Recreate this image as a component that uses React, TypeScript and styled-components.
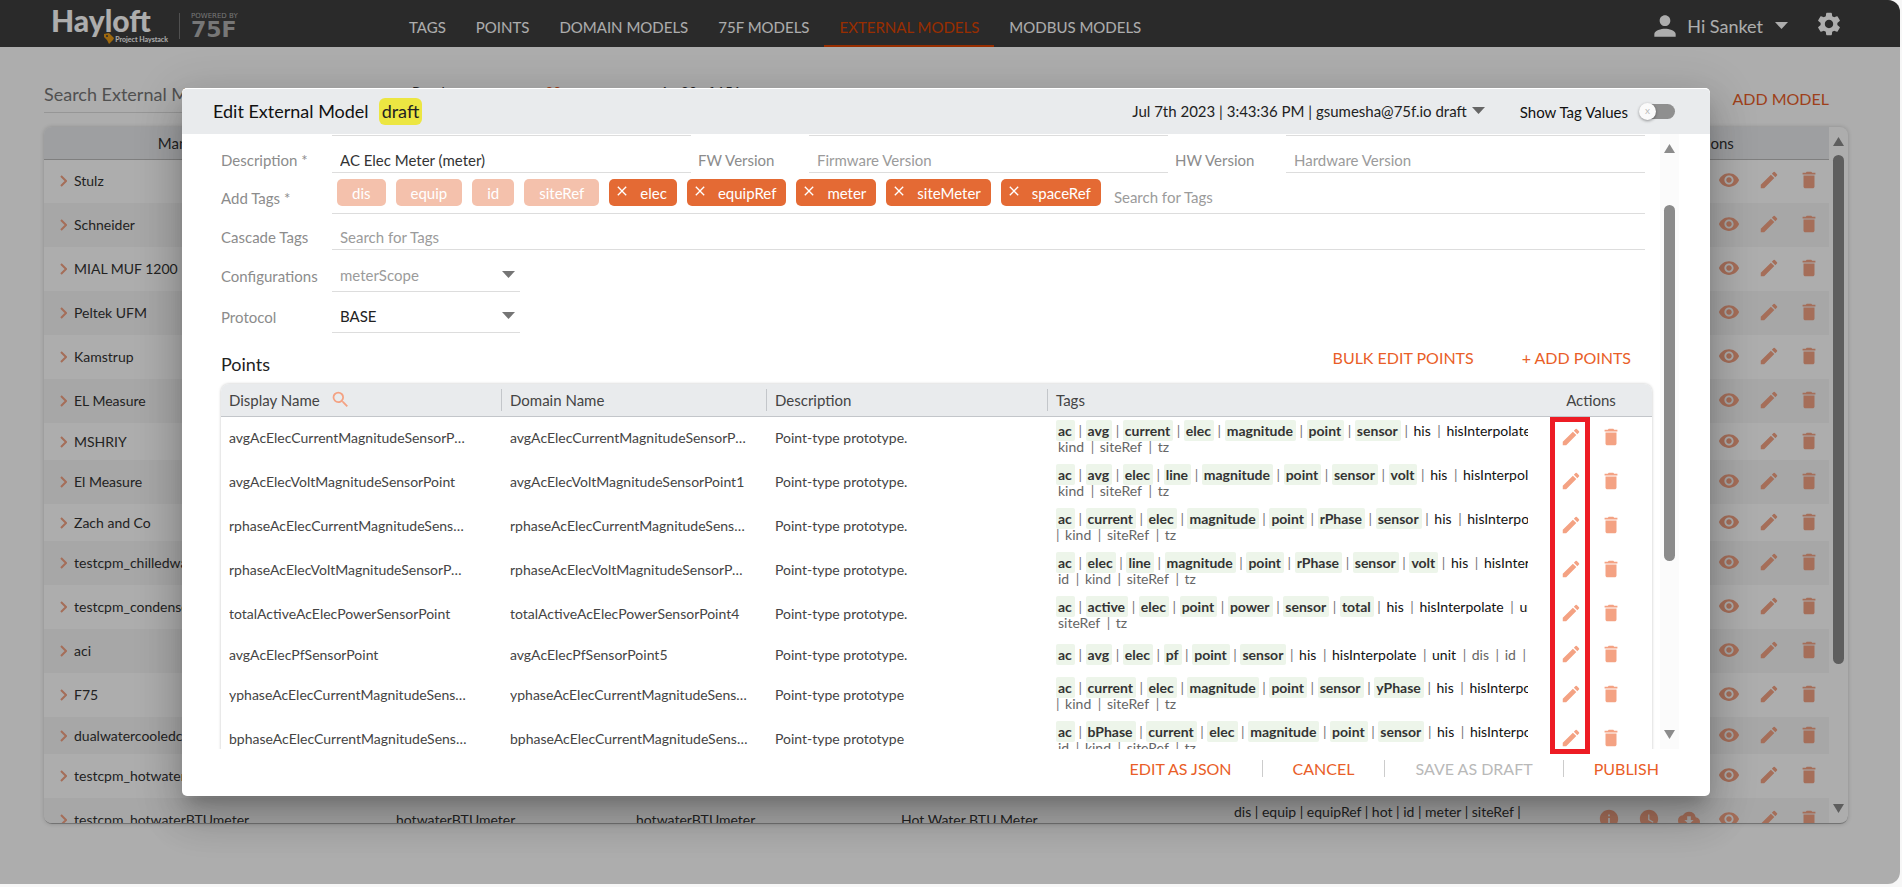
import React from "react";
import styled, { createGlobalStyle, css } from "styled-components";
import {
  MdClose,
  MdCloudDownload,
  MdDelete,
  MdEdit,
  MdInfo,
  MdPerson,
  MdSearch,
  MdSettings,
  MdVisibility,
  MdWatchLater,
} from "react-icons/md";

const ORANGE = "#e95e28";

const GlobalStyle = createGlobalStyle`
  *, *::before, *::after { box-sizing: border-box; }
  body { margin: 0; background: #f7f7f7; font-family: Lato, "Liberation Sans", sans-serif; color: #333; }
  button, input, select { font: inherit; color: inherit; border: 0; background: none; padding: 0; margin: 0; }
  button { cursor: pointer; }
  a { color: inherit; text-decoration: none; }
`;

const Frame = styled.div`
  position: relative;
  display: flex;
  flex-direction: column;
  height: calc(100vh - 3px);
  margin-right: 2px;
  overflow: hidden;
  border-radius: 0 12px 12px 0;
  background: #fff;
`;

/* ---------- top bar ---------- */

const TopBar = styled.header`
  display: flex;
  align-items: stretch;
  flex: none;
  height: 47px;
  padding: 0 57px 0 51px;
  background: #3e3e3e;
  color: #fff;
`;

const Brand = styled.div`
  display: flex;
  align-items: center;
  width: 343px;
`;

const BrandName = styled.div`
  display: flex;
  flex-direction: column;
  align-items: flex-end;
  width: 117px;
  padding-top: 2px;
`;

const BrandWord = styled.strong`
  align-self: flex-start;
  font-size: 30px;
  line-height: 28px;
  font-weight: 900;
  color: #fff;
`;

const BrandSub = styled.span`
  display: flex;
  align-items: center;
  gap: 1px;
  height: 10px;
  font-size: 7px;
  line-height: 10px;
  font-weight: 700;
`;

const BrandPowered = styled.div`
  display: flex;
  flex-direction: column;
  justify-content: center;
  height: 26px;
  margin: 4px 0 0 11px;
  padding-left: 11px;
  border-left: 1px solid #777;
  color: #b0b0b0;
  font: 7px/8px "DejaVu Sans", sans-serif;
`;

const BrandNumber = styled.span`
  font: 700 22px/20px "DejaVu Sans", sans-serif;
`;

const Nav = styled.nav`
  display: flex;
  flex: 1;
`;

const NavLink = styled.a<{ $active?: boolean }>`
  display: flex;
  align-items: center;
  padding: 8px 15px 0;
  border-bottom: 2px solid transparent;
  font-size: 15px;
  line-height: 20px;
  white-space: nowrap;
  ${(p) =>
    p.$active &&
    css`
      color: #e04400;
      border-color: #e04400;
    `}
`;

const Account = styled.div`
  display: flex;
  align-items: center;
  gap: 27px;
`;

const AccountButton = styled.button`
  display: flex;
  align-items: center;
  gap: 12px;
  padding-top: 4px;
  font-size: 18px;
  line-height: 22px;
  svg:first-child { margin: 0 -6px; }
`;

/* ---------- page behind the dialog ---------- */

const Page = styled.main`
  display: flex;
  flex: 1;
  flex-direction: column;
  min-height: 0;
  padding: 31px 52px 60px 44px;
`;

const Toolbar = styled.div`
  display: flex;
  align-items: flex-start;
  height: 49px;
  padding-right: 19px;
`;

const SearchBox = styled.input`
  width: 300px;
  height: 35px;
  padding-bottom: 3px;
  border-bottom: 1px solid #ddd;
  font-size: 18px;
  &::placeholder { color: #777; opacity: 1; }
`;

const Pager = styled.div`
  display: flex;
  flex: 1;
  gap: 99px;
  padding: 5px 0 0 68px;
  font-size: 14px;
  line-height: 18px;
  b { margin-left: 29px; font-weight: 400; color: ${ORANGE}; }
`;

const TextButton = styled.button`
  font-size: 16px;
  line-height: 22px;
  color: ${ORANGE};
  white-space: nowrap;
  &:disabled { color: #b9b9b9; cursor: default; }
`;

const AddModel = styled(TextButton)`
  padding-top: 10px;
`;

const ModelsPanel = styled.section`
  display: flex;
  flex: 1;
  min-height: 0;
  overflow: hidden;
  border-bottom: 1px solid #aaa;
  border-radius: 8px;
  box-shadow: 0 0 4px rgba(0, 0, 0, 0.2);
`;

const TableClip = styled.div`
  flex: 1;
  min-width: 0;
  overflow: hidden;
`;

const ModelsTable = styled.table`
  width: 100%;
  table-layout: fixed;
  border-collapse: collapse;
  font-size: 14px;
  line-height: 18px;
  th {
    height: 32px;
    padding: 0 0 0 8px;
    border-bottom: 1px solid #bbb;
    background: #e9ebee;
    font-size: 15px;
    font-weight: 400;
  }
  th:last-child { padding: 0 8px; }
  td { padding: 0; white-space: nowrap; }
`;

const ModelRow = styled.tr<{ $short?: boolean }>`
  height: ${(p) => (p.$short ? 37 : 44)}px;
  &:nth-child(even) { background: #f6f6f6; }
`;

const ModelName = styled.span`
  display: flex;
  align-items: center;
  gap: 7px;
  padding-left: 16px;
  color: #333;
`;

const Chevron = () => (
  <svg width="7" height="12" viewBox="0 0 7 12" fill="none" stroke="#f3a283" strokeWidth="2" aria-hidden="true">
    <path d="M1 1l5 5-5 5" />
  </svg>
);

const TwoLines = styled.div`
  line-height: 17px;
`;

const IconRow = styled.div<{ $start?: boolean }>`
  display: flex;
  justify-content: ${(p) => (p.$start ? "flex-start" : "flex-end")};
  gap: 18px;
  padding: ${(p) => (p.$start ? "0 0 2px 16px" : "0 9px 2px 0")};
`;

const IconButton = styled.button`
  display: flex;
  color: #f4a283;
`;

const SettingsButton = styled(IconButton)`
  color: #fff;
`;

/* ---------- scroll bar ---------- */

const ScrollTrack = styled.div<{ $top: number; $thumb: number; $wide?: boolean }>`
  display: flex;
  flex: none;
  flex-direction: column;
  align-items: center;
  width: 19px;
  padding: 10px 0;
  background: ${(p) => (p.$wide ? "#fbfbfb" : "transparent")};
  color: #8b8b8b;
  i {
    width: 11px;
    height: ${(p) => p.$thumb}px;
    margin: ${(p) => p.$top}px 0 auto;
    border-radius: 6px;
    background: #8b8b8b;
  }
`;

const Triangle = ({ up, wide }: { up?: boolean; wide?: boolean }) => (
  <svg width={wide ? 13 : 11} height={wide ? 7 : 9} viewBox="0 0 10 10" preserveAspectRatio="none" fill="currentColor" aria-hidden="true">
    <path d={up ? "M0 10 5 0l5 10z" : "M0 0h10L5 10z"} />
  </svg>
);

const ScrollBar = ({ top, thumb, wide }: { top: number; thumb: number; wide?: boolean }) => (
  <ScrollTrack $top={top} $thumb={thumb} $wide={wide}>
    <Triangle up />
    <i />
    <Triangle />
  </ScrollTrack>
);

/* ---------- dialog ---------- */

const Backdrop = styled.div`
  position: absolute;
  inset: 0;
  display: flex;
  padding: 88px 190px 88px 182px;
  background: rgba(0, 0, 0, 0.32);
`;

const Dialog = styled.section`
  position: relative;
  display: flex;
  flex: 1;
  flex-direction: column;
  min-width: 0;
  border-radius: 5px;
  background: #fff;
  box-shadow:
    0 11px 15px -7px rgba(0, 0, 0, 0.2),
    0 24px 38px 3px rgba(0, 0, 0, 0.14),
    0 9px 46px 8px rgba(0, 0, 0, 0.12);
`;

const DialogHeader = styled.header`
  display: flex;
  align-items: center;
  flex: none;
  height: 46px;
  padding: 0 35px 0 31px;
  border-top: 1px solid #fff;
  border-radius: 5px 5px 0 0;
  background: #e9ebed;
  color: #222;
`;

const Title = styled.h1`
  margin: 0;
  padding-bottom: 1px;
  font-size: 18px;
  line-height: 22px;
  font-weight: 400;
  color: #111;
`;

const Badge = styled.span`
  margin: 0 auto 0 10px;
  padding: 2px 3px 3px;
  border-radius: 6px;
  background: #ece642;
  font-size: 18px;
  line-height: 22px;
`;

const Revision = styled.button`
  display: flex;
  align-items: center;
  gap: 5px;
  margin-right: 35px;
  padding-bottom: 2px;
  font-size: 15px;
  line-height: 20px;
  svg { color: #666; }
`;

const Toggle = styled.label`
  display: flex;
  align-items: center;
  gap: 13px;
  font-size: 15px;
  line-height: 20px;
  color: #111;
  input {
    appearance: none;
    display: flex;
    align-items: center;
    width: 34px;
    height: 15px;
    border-radius: 8px;
    background: #8f8f8f;
  }
  input::before {
    content: "x";
    flex: none;
    width: 17px;
    height: 17px;
    margin-left: -2px;
    border-radius: 50%;
    background: #fafafa;
    box-shadow: 0 1px 3px rgba(0, 0, 0, 0.4);
    color: #bbb;
    font-size: 10px;
    line-height: 15px;
    text-align: center;
  }
`;

const DialogBody = styled.div`
  display: flex;
  flex: 1;
  min-height: 0;
  padding-right: 31px;
`;

const Scroller = styled.div`
  flex: 1;
  min-width: 0;
  overflow: hidden;
  padding: 0 8px 0 39px;
`;

const Form = styled.form`
  padding-right: 7px;
  font-size: 15px;
  line-height: 20px;
`;

const FormRow = styled.div<{ $height: number }>`
  display: grid;
  grid-template-columns: 111px 1fr 118px 1fr 118px 1fr;
  grid-template-rows: 100%;
  height: ${(p) => p.$height}px;
`;

const FieldLabel = styled.label<{ $inset?: boolean }>`
  align-self: end;
  padding: 0 0 3px ${(p) => (p.$inset ? 7 : 0)}px;
  color: #8c8c8c;
  white-space: nowrap;
`;

const Field = styled.input<{ $full?: boolean }>`
  align-self: end;
  width: 100%;
  height: 24px;
  ${(p) => p.$full && "grid-column: 2 / -1;"}
  padding: 0 8px 2px;
  border-bottom: 1px solid #ddd;
  outline: none;
  &::placeholder { color: #9b9b9b; opacity: 1; }
`;

const TagField = styled.div`
  display: flex;
  grid-column: 2 / -1;
  gap: 10px;
  padding: 6px 5px 0;
  border-bottom: 1px solid #ddd;
`;

const Chip = styled.span<{ $locked?: boolean }>`
  display: flex;
  gap: 10px;
  height: 27px;
  padding: ${(p) => (p.$locked ? "4px 15px 0" : "4px 10px 0 5px")};
  border-radius: 5px;
  background: ${(p) => (p.$locked ? "#f4c1ac" : "#e46a34")};
  color: #fff;
  white-space: nowrap;
`;

const ChipRemove = styled.button`
  display: flex;
  height: 16px;
`;

const TagInput = styled.input`
  flex: 1;
  min-width: 0;
  height: 27px;
  padding: 8px 3px 0;
  outline: none;
  &::placeholder { color: #9b9b9b; opacity: 1; }
`;

const SelectBox = styled.div<{ $muted?: boolean }>`
  display: flex;
  align-items: center;
  align-self: end;
  width: 188px;
  height: 34px;
  padding: 0 5px 0 8px;
  border-bottom: 1px solid #ddd;
  color: ${(p) => (p.$muted ? "#9b9b9b" : "#222")};
  select { appearance: none; flex: 1; outline: none; opacity: 1; }
  svg { color: #757575; pointer-events: none; }
`;

const SelectLabel = styled(FieldLabel)`
  padding-bottom: 6px;
`;

const PointsBar = styled.div`
  display: flex;
  align-items: center;
  gap: 48px;
  height: 51px;
  padding: 0 21px 2px 0;
`;

const PointsTitle = styled.h2`
  margin: 12px auto 0 0;
  font-size: 18px;
  line-height: 22px;
  font-weight: 400;
  color: #222;
`;

const PointsPanel = styled.div`
  overflow: hidden;
  border-radius: 8px;
  box-shadow: 0 0 3px rgba(0, 0, 0, 0.25);
`;

const PointsTable = styled.table`
  width: 100%;
  table-layout: fixed;
  border-collapse: collapse;
  font-size: 14px;
  line-height: 18px;
  color: #444;
  thead tr { border-bottom: 1px solid #c3c6ca; background: #e9ebed; }
  th {
    height: 32px;
    padding: 0;
    font-size: 15px;
    font-weight: 400;
    text-align: left;
  }
  td { padding: 0 8px; white-space: nowrap; }
`;

const HeadCell = styled.div<{ $divided?: boolean; $center?: boolean }>`
  display: flex;
  align-items: center;
  justify-content: ${(p) => (p.$center ? "center" : "flex-start")};
  gap: 10px;
  height: 22px;
  padding: 0 ${(p) => (p.$center ? 13 : 0)}px 0 8px;
  border-right: 1px solid ${(p) => (p.$divided ? "#c3c6ca" : "transparent")};
`;

const PointRow = styled.tr<{ $short?: boolean }>`
  height: ${(p) => (p.$short ? 37 : 44)}px;
`;

const Ellipsis = styled.div`
  width: 238px;
  max-width: 100%;
  overflow: hidden;
  text-overflow: ellipsis;
`;

const TagLines = styled.div`
  overflow: hidden;
  padding: 4px 0 3px;
`;

const TagLine = styled.div`
  height: 16px;
  line-height: 16px;
  color: #777;
`;

const Tag = styled.span<{ $kind: string }>`
  padding: 2px 3px 2px 2px;
  border-radius: 2px;
  ${(p) => p.$kind === "marker" && "background: #edf5ea; color: #333; font-weight: 700;"}
  ${(p) => p.$kind === "own" && "color: #111;"}
  ${(p) => p.$kind === "base" && "color: #666;"}
`;

const EditHighlight = styled.div`
  position: absolute;
  top: 329px;
  right: 120px;
  bottom: 42px;
  width: 40px;
  border: 5px solid #ed1c24;
  pointer-events: none;
`;

const DialogFooter = styled.footer`
  display: flex;
  align-items: center;
  justify-content: flex-end;
  flex: none;
  gap: 30px;
  height: 47px;
  padding: 0 51px 8px 0;
`;

const Divider = styled.span`
  width: 1px;
  height: 17px;
  background: #ccc;
`;

/* ---------- data ---------- */

const NAV = ["TAGS", "POINTS", "DOMAIN MODELS", "75F MODELS", "EXTERNAL MODELS", "MODBUS MODELS"];

const MODELS = [
  "Stulz", "Schneider", "MIAL MUF 1200", "Peltek UFM", "Kamstrup", "EL Measure", "MSHRIY", "El Measure",
  "Zach and Co", "testcpm_chilledwater", "testcpm_condenser", "aci", "F75", "dualwatercooledchiller",
  "testcpm_hotwater", "testcpm_hotwaterBTUmeter",
];
const SHORT_MODELS = ["MSHRIY", "Zach and Co", "dualwatercooledchiller"];
const LAST_MODEL = "testcpm_hotwaterBTUmeter";

const LOCKED_TAGS = ["dis", "equip", "id", "siteRef"];
const ADDED_TAGS = ["elec", "equipRef", "meter", "siteMeter", "spaceRef"];

type Point = { name: string; domain: string; desc: string; markers: string; own: string; base?: string; second?: string };

const POINTS: Point[] = [
  { name: "avgAcElecCurrentMagnitudeSensorPoint", domain: "avgAcElecCurrentMagnitudeSensorPoint", desc: "Point-type prototype.", markers: "ac avg current elec magnitude point sensor", own: "his hisInterpolate", second: "kind siteRef tz" },
  { name: "avgAcElecVoltMagnitudeSensorPoint", domain: "avgAcElecVoltMagnitudeSensorPoint1", desc: "Point-type prototype.", markers: "ac avg elec line magnitude point sensor volt", own: "his hisInterpolate", second: "kind siteRef tz" },
  { name: "rphaseAcElecCurrentMagnitudeSensorPoint", domain: "rphaseAcElecCurrentMagnitudeSensorPoint", desc: "Point-type prototype.", markers: "ac current elec magnitude point rPhase sensor", own: "his hisInterpolate", second: "| kind siteRef tz" },
  { name: "rphaseAcElecVoltMagnitudeSensorPoint", domain: "rphaseAcElecVoltMagnitudeSensorPoint", desc: "Point-type prototype.", markers: "ac elec line magnitude point rPhase sensor volt", own: "his hisInterpolate", second: "id kind siteRef tz" },
  { name: "totalActiveAcElecPowerSensorPoint", domain: "totalActiveAcElecPowerSensorPoint4", desc: "Point-type prototype.", markers: "ac active elec point power sensor total", own: "his hisInterpolate unit", second: "siteRef tz" },
  { name: "avgAcElecPfSensorPoint", domain: "avgAcElecPfSensorPoint5", desc: "Point-type prototype.", markers: "ac avg elec pf point sensor", own: "his hisInterpolate unit", base: "dis id |" },
  { name: "yphaseAcElecCurrentMagnitudeSensorPoint", domain: "yphaseAcElecCurrentMagnitudeSensorPoint", desc: "Point-type prototype", markers: "ac current elec magnitude point sensor yPhase", own: "his hisInterpolate", second: "| kind siteRef tz" },
  { name: "bphaseAcElecCurrentMagnitudeSensorPoint", domain: "bphaseAcElecCurrentMagnitudeSensorPoint", desc: "Point-type prototype", markers: "ac bPhase current elec magnitude point sensor", own: "his hisInterpolate", second: "id kind siteRef tz" },
];

const Tags = ({ groups }: { groups: [string, string][] }) => {
  const tags = groups.flatMap(([kind, words]) => words.split(" ").filter(Boolean).map((word) => ({ kind, word })));
  return (
    <TagLine>
      {tags.map(({ kind, word }, i) => (
        <React.Fragment key={word}>
          {i > 0 && word !== "|" && tags[i - 1].word !== "|" && " | "}
          {word === "|" ? " | " : <Tag $kind={kind}>{word}</Tag>}
        </React.Fragment>
      ))}
    </TagLine>
  );
};

const ModelActions = () => (
  <IconRow>
    <IconButton aria-label="Info"><MdInfo size={22} /></IconButton>
    <IconButton aria-label="History"><MdWatchLater size={22} /></IconButton>
    <IconButton aria-label="Download"><MdCloudDownload size={22} /></IconButton>
    <IconButton aria-label="View"><MdVisibility size={22} /></IconButton>
    <IconButton aria-label="Edit"><MdEdit size={22} /></IconButton>
    <IconButton aria-label="Delete"><MdDelete size={22} /></IconButton>
  </IconRow>
);

export default function App() {
  return (
    <>
      <GlobalStyle />
      <Frame>
        <TopBar>
          <Brand>
            <BrandName>
              <BrandWord>Hayloft</BrandWord>
              <BrandSub>
                <svg width="10" height="11" viewBox="0 0 10 11" aria-hidden="true">
                  <path d="M0 1l5-1 5 5-1 2-4 4-2-4-3-3z" fill="#e79a17" />
                  <circle cx="3" cy="3" r="1" fill="#3e3e3e" />
                </svg>
                Project Haystack
              </BrandSub>
            </BrandName>
            <BrandPowered>
              POWERED BY
              <BrandNumber>75F</BrandNumber>
            </BrandPowered>
          </Brand>
          <Nav>
            {NAV.map((item) => (
              <NavLink key={item} href="#" $active={item === "EXTERNAL MODELS"}>{item}</NavLink>
            ))}
          </Nav>
          <Account>
            <AccountButton>
              <MdPerson size={32} />
              Hi Sanket
              <Triangle wide />
            </AccountButton>
            <SettingsButton aria-label="Settings"><MdSettings size={28} /></SettingsButton>
          </Account>
        </TopBar>

        <Page>
          <Toolbar>
            <SearchBox aria-label="Search External Models" placeholder="Search External Models" />
            <Pager>
              <span>Results per page <b>20</b></span>
              <span>1 - 20 of 151</span>
            </Pager>
            <AddModel>ADD MODEL</AddModel>
          </Toolbar>
          <ModelsPanel>
            <TableClip>
              <ModelsTable>
                <colgroup>
                  <col style={{ width: "352px" }} />
                  <col style={{ width: "240px" }} />
                  <col style={{ width: "265px" }} />
                  <col style={{ width: "333px" }} />
                  <col />
                  <col style={{ width: "240px" }} />
                </colgroup>
                <thead>
                  <tr>
                    <th>Manufacturer Name</th><th /><th /><th /><th /><th>Actions</th>
                  </tr>
                </thead>
                <tbody>
                  {MODELS.map((name) => {
                    const last = name === LAST_MODEL;
                    return (
                      <ModelRow key={name} $short={SHORT_MODELS.includes(name)}>
                        <td><ModelName><Chevron />{name}</ModelName></td>
                        <td>{last && "hotwaterBTUmeter"}</td>
                        <td>{last && "hotwaterBTUmeter"}</td>
                        <td>{last && "Hot Water BTU Meter"}</td>
                        <td>{last && <TwoLines>dis | equip | equipRef | hot | id | meter | siteRef |<br />spaceRef | submeterOf</TwoLines>}</td>
                        <td><ModelActions /></td>
                      </ModelRow>
                    );
                  })}
                </tbody>
              </ModelsTable>
            </TableClip>
            <ScrollBar top={9} thumb={509} />
          </ModelsPanel>
        </Page>

        <Backdrop>
          <Dialog role="dialog" aria-labelledby="dialog-title">
            <DialogHeader>
              <Title id="dialog-title">Edit External Model</Title>
              <Badge>draft</Badge>
              <Revision>
                Jul 7th 2023 | 3:43:36 PM | gsumesha@75f.io draft
                <Triangle wide />
              </Revision>
              <Toggle>
                Show Tag Values
                <input type="checkbox" />
              </Toggle>
            </DialogHeader>

            <DialogBody>
              <Scroller>
                <Form>
                  <FormRow $height={2}>
                    <span /><Field aria-label="Manufacturer" /><span /><Field aria-label="Model number" /><span /><Field aria-label="Model name" />
                  </FormRow>
                  <FormRow $height={37}>
                    <FieldLabel htmlFor="description">Description *</FieldLabel>
                    <Field id="description" defaultValue="AC Elec Meter (meter)" />
                    <FieldLabel $inset htmlFor="fw">FW Version</FieldLabel>
                    <Field id="fw" placeholder="Firmware Version" />
                    <FieldLabel $inset htmlFor="hw">HW Version</FieldLabel>
                    <Field id="hw" placeholder="Hardware Version" />
                  </FormRow>
                  <FormRow $height={41}>
                    <SelectLabel htmlFor="tags">Add Tags *</SelectLabel>
                    <TagField>
                      {LOCKED_TAGS.map((tag) => <Chip key={tag} $locked>{tag}</Chip>)}
                      {ADDED_TAGS.map((tag) => (
                        <Chip key={tag}>
                          <ChipRemove type="button" aria-label={`Remove ${tag}`}><MdClose size={16} /></ChipRemove>
                          {tag}
                        </Chip>
                      ))}
                      <TagInput id="tags" placeholder="Search for Tags" />
                    </TagField>
                  </FormRow>
                  <FormRow $height={36}>
                    <FieldLabel htmlFor="cascade">Cascade Tags</FieldLabel>
                    <Field id="cascade" $full placeholder="Search for Tags" />
                  </FormRow>
                  <FormRow $height={42}>
                    <SelectLabel htmlFor="config">Configurations</SelectLabel>
                    <SelectBox $muted>
                      <select id="config"><option>meterScope</option></select>
                      <Triangle wide />
                    </SelectBox>
                  </FormRow>
                  <FormRow $height={41}>
                    <SelectLabel htmlFor="protocol">Protocol</SelectLabel>
                    <SelectBox>
                      <select id="protocol"><option>BASE</option></select>
                      <Triangle wide />
                    </SelectBox>
                  </FormRow>
                </Form>

                <PointsBar>
                  <PointsTitle>Points</PointsTitle>
                  <TextButton>BULK EDIT POINTS</TextButton>
                  <TextButton>+ ADD POINTS</TextButton>
                </PointsBar>

                <PointsPanel>
                  <PointsTable>
                    <colgroup>
                      <col style={{ width: "281px" }} />
                      <col style={{ width: "265px" }} />
                      <col style={{ width: "281px" }} />
                      <col />
                      <col style={{ width: "116px" }} />
                    </colgroup>
                    <thead>
                      <tr>
                        <th><HeadCell $divided>Display Name <MdSearch size={21} color="#f4a283" /></HeadCell></th>
                        <th><HeadCell $divided>Domain Name</HeadCell></th>
                        <th><HeadCell $divided>Description</HeadCell></th>
                        <th><HeadCell>Tags</HeadCell></th>
                        <th><HeadCell $center>Actions</HeadCell></th>
                      </tr>
                    </thead>
                    <tbody>
                      {POINTS.map((p) => (
                        <PointRow key={p.name} $short={!p.second}>
                          <td><Ellipsis>{p.name}</Ellipsis></td>
                          <td><Ellipsis>{p.domain}</Ellipsis></td>
                          <td>{p.desc}</td>
                          <td>
                            <TagLines>
                              <Tags groups={[["marker", p.markers], ["own", p.own], ["base", p.base ?? ""]]} />
                              {p.second && <Tags groups={[["base", p.second]]} />}
                            </TagLines>
                          </td>
                          <td>
                            <IconRow $start>
                              <IconButton aria-label={`Edit ${p.name}`}><MdEdit size={22} /></IconButton>
                              <IconButton aria-label={`Delete ${p.name}`}><MdDelete size={22} /></IconButton>
                            </IconRow>
                          </td>
                        </PointRow>
                      ))}
                    </tbody>
                  </PointsTable>
                </PointsPanel>
              </Scroller>
              <ScrollBar top={52} thumb={356} wide />
            </DialogBody>

            <DialogFooter>
              <TextButton>EDIT AS JSON</TextButton>
              <Divider />
              <TextButton>CANCEL</TextButton>
              <Divider />
              <TextButton disabled>SAVE AS DRAFT</TextButton>
              <Divider />
              <TextButton>PUBLISH</TextButton>
            </DialogFooter>
            <EditHighlight />
          </Dialog>
        </Backdrop>
      </Frame>
    </>
  );
}
